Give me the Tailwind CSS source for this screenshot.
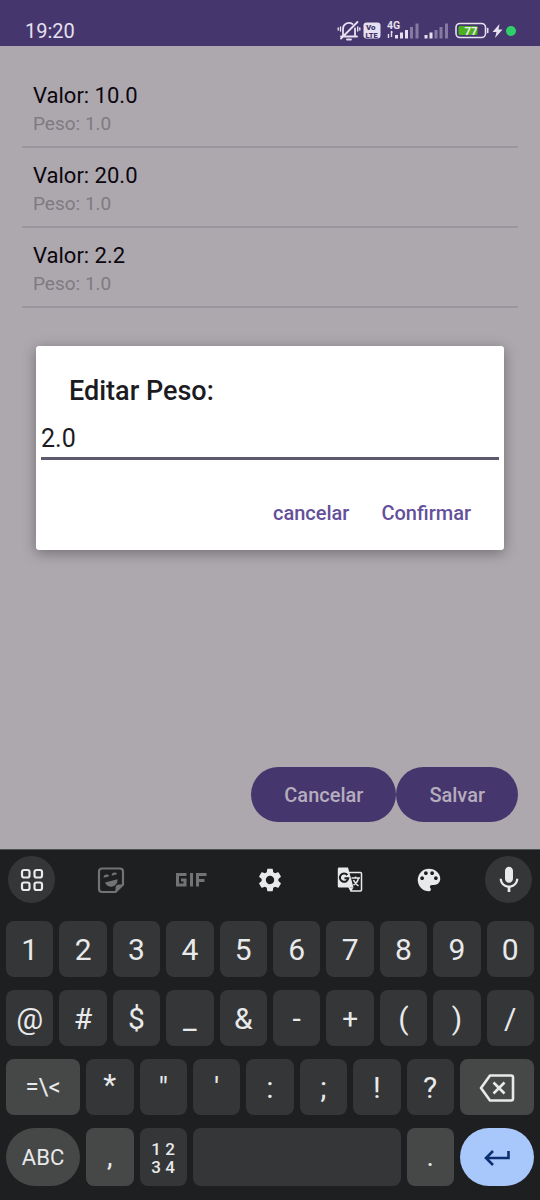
<!DOCTYPE html>
<html lang="pt-BR">
<head>
<meta charset="utf-8">
<meta name="viewport" content="width=device-width, initial-scale=1">
<title>Editar Peso</title>
<script src="https://cdn.jsdelivr.net/npm/@tailwindcss/browser@4"></script>
</head>
<body class="flex min-h-screen flex-col bg-[#ada8ae] font-['Roboto',sans-serif]">

<header class="flex h-[46px] items-end justify-between bg-[#45366d] pr-6 pb-1 pl-[25px] text-[#e6e0f0]">
  <span class="text-xl leading-[22px]">19:20</span>
  <div class="flex h-[22px] items-center">
    <!-- muted bell -->
    <svg class="h-[22px] w-[24px]" viewBox="0 0 24 22" fill="none" stroke="currentColor" stroke-width="1.8" stroke-linecap="round" stroke-linejoin="round">
      <path d="M6 15.500V9a6 6 0 0 1 9.500-5M18 8.500V15.500M4 16.500H20M10 19.500h4M20.500 2L4 18.500"/>
      <path d="M3.500 7v4M1.200 8v2M20.700 7v4M22.800 8v2" stroke-width="1.400"/>
    </svg>
    <!-- VoLTE badge -->
    <svg class="ml-[2px] h-[18px] w-[18px]" viewBox="0 0 18 18">
      <rect x="0.500" y="0.500" width="17" height="16" rx="3" fill="currentColor"/>
      <text x="3" y="8" font-size="8" font-weight="900" fill="#45366d">Vo</text>
      <text x="2.500" y="15.500" font-size="7.500" font-weight="900" fill="#45366d">LTE</text>
    </svg>
    <!-- 4G signal -->
    <svg class="ml-[6px] h-[22px] w-[34px]" viewBox="0 0 34 22" fill="currentColor">
      <text x="0" y="8.500" font-size="10.500" font-weight="700">4G</text>
      <path d="M1.500 14v4M4.500 11v6" stroke="currentColor" stroke-width="1.400"/>
      <path d="M3.500 12.500l1-2 1.500 2z"/>
      <path d="M8 15h3v3.500H8zM13 12.500h3v6h-3zM18 10h3v8.500h-3z"/>
      <path d="M23 7h3v11.500h-3zM28.500 3.500h3v15h-3z" opacity=".4"/>
    </svg>
    <svg class="ml-[3px] h-[22px] w-[26px]" viewBox="0 0 26 22" fill="currentColor">
      <path d="M0.500 15h3v3.500h-3zM5.500 12.500h3v6h-3z"/>
      <path d="M10.500 10h3v8.500h-3zM15.500 7h3v11.500h-3zM21 3.500h3v15h-3z" opacity=".4"/>
    </svg>
    <!-- battery -->
    <svg class="ml-[5px] h-[18px] w-[34px]" viewBox="0 0 34 18">
      <rect x="1" y="1.500" width="29.500" height="14" rx="4" fill="none" stroke="currentColor" stroke-width="1.600"/>
      <rect x="3.500" y="4" width="19" height="9" rx="1.500" fill="#4caf1d"/>
      <path d="M32.700 6.500v4" stroke="currentColor" stroke-width="1.600" stroke-linecap="round"/>
      <text x="16" y="12.500" text-anchor="middle" font-size="11.500" font-weight="700" fill="#eeeaf4">77</text>
    </svg>
    <svg class="ml-[3px] h-[14px] w-[11px]" viewBox="0 0 11 14" fill="currentColor"><path d="M7.500 0L0.500 8h4L3 14l7.500-8.500H6.500z"/></svg>
    <span class="ml-[3px] size-[10px] rounded-full bg-[#2fd069]"></span>
  </div>
</header>

<main class="relative flex flex-1 flex-col justify-between px-[22px] pt-[22px] pb-[27px]">
  <ul>
    <li class="flex h-20 flex-col justify-center border-b-2 border-[#9b969d] px-[11px] pt-1.5">
      <span class="text-[22px] leading-7 text-[#0b060f]">Valor: 10.0</span>
      <span class="text-[19px] leading-7 text-[#7f7a82]">Peso: 1.0</span>
    </li>
    <li class="flex h-20 flex-col justify-center border-b-2 border-[#9b969d] px-[11px] pt-1.5">
      <span class="text-[22px] leading-7 text-[#0b060f]">Valor: 20.0</span>
      <span class="text-[19px] leading-7 text-[#7f7a82]">Peso: 1.0</span>
    </li>
    <li class="flex h-20 flex-col justify-center border-b-2 border-[#9b969d] px-[11px] pt-1.5">
      <span class="text-[22px] leading-7 text-[#0b060f]">Valor: 2.2</span>
      <span class="text-[19px] leading-7 text-[#7f7a82]">Peso: 1.0</span>
    </li>
  </ul>

  <div class="flex justify-end text-xl font-medium text-[#b5adbd]">
    <button type="button" class="h-[55px] rounded-full bg-[#45366d] px-[33px]">Cancelar</button>
    <button type="button" class="h-[55px] rounded-full bg-[#45366d] px-[33px]">Salvar</button>
  </div>

  <div class="absolute inset-0 flex items-center px-9">
    <form role="dialog" aria-labelledby="titulo" class="w-full rounded-[3px] bg-white pt-[29px] pb-[18px] shadow-[0_3px_14px_rgba(0,0,0,0.35)]">
      <label id="titulo" for="peso" class="block px-[33px] text-[27px] leading-8 font-medium text-[#1c1b1f]">Editar Peso:</label>
      <div class="px-[5px] pt-[13px]">
        <input id="peso" type="text" inputmode="decimal" value="2.0" class="block h-10 w-full border-b-[3px] border-[#5d5a70] text-[25px] text-[#1c1b1f] outline-none">
      </div>
      <div class="flex justify-end gap-8 pt-[34px] pr-[33px] text-xl font-medium text-[#64509a]">
        <button type="button" class="h-[38px]">cancelar</button>
        <button type="button" class="h-[38px]">Confirmar</button>
      </div>
    </form>
  </div>
</main>

<section aria-label="Teclado" class="border-t border-[#4c5251] bg-[#1e1f21] px-1.5 pt-1.5 pb-3.5 text-[#e8e9ea]">
  <div class="flex justify-between px-0.5 pb-[18px]">
    <button type="button" aria-label="Menu" class="flex size-[47px] items-center justify-center rounded-full bg-[#353638]">
      <svg class="size-6" viewBox="0 0 24 24" fill="none" stroke="currentColor" stroke-width="2.200"><rect x="2" y="2" width="7.500" height="7.500" rx="2"/><rect x="14.500" y="2" width="7.500" height="7.500" rx="2"/><rect x="2" y="14.500" width="7.500" height="7.500" rx="2"/><rect x="14.500" y="14.500" width="7.500" height="7.500" rx="2"/></svg>
    </button>
    <button type="button" aria-label="Figurinhas" class="flex size-[47px] items-center justify-center text-[#727375]">
      <svg class="size-7" viewBox="0 0 28 28" fill="none" stroke="currentColor" stroke-width="2.200">
        <path d="M5 2.500H23a3 3 0 0 1 3 3V18.500L18.500 26H5a3 3 0 0 1-3-3V5.500a3 3 0 0 1 3-3z"/>
        <path d="M19 26v-4.500a2.500 2.500 0 0 1 2.500-2.500H26L19 26z" fill="currentColor" stroke-width="1"/>
        <path d="M8 16.500l12.500-3.200a6.500 6.500 0 0 1-12.500 3.200z" fill="currentColor" stroke="none"/>
        <path d="M7.500 11.500a2.100 2.100 0 0 1 3.800-1M15.500 9.300a2.100 2.100 0 0 1 3.800-.9"/>
      </svg>
    </button>
    <button type="button" aria-label="GIF" class="flex size-[47px] items-center justify-center text-[#727375]">
      <svg class="h-4 w-8" viewBox="0 0 32 16" fill="none" stroke="currentColor" stroke-width="3">
        <path d="M11.500 2.500H2.500V13H10V8H6M16.500 1V14.500M22.500 14.500V2.500H31.500M22.500 8.500H29.500"/>
      </svg>
    </button>
    <button type="button" aria-label="Configurações" class="flex size-[47px] items-center justify-center">
      <svg class="size-7" viewBox="0 0 24 24" fill="currentColor"><path d="M19.140 12.940c.04-.3.060-.61.060-.94 0-.32-.02-.64-.07-.94l2.030-1.580a.49.49 0 0 0 .12-.61l-1.920-3.320a.488.488 0 0 0-.59-.22l-2.390.96c-.5-.38-1.030-.7-1.620-.94l-.36-2.540a.484.484 0 0 0-.48-.41h-3.840c-.24 0-.43.17-.47.41l-.36 2.540c-.59.24-1.130.57-1.620.94l-2.390-.96c-.22-.08-.47 0-.59.22L2.740 8.870c-.12.21-.08.47.12.61l2.030 1.580c-.05.3-.09.63-.09.94s.02.64.07.94l-2.030 1.580a.49.49 0 0 0-.12.61l1.920 3.320c.12.22.37.29.59.22l2.390-.96c.5.38 1.030.7 1.620.94l.36 2.540c.05.24.24.41.48.41h3.840c.24 0 .44-.17.47-.41l.36-2.540c.59-.24 1.130-.56 1.620-.94l2.390.96c.22.080.47 0 .59-.22l1.920-3.320c.12-.22.070-.47-.12-.61l-2.010-1.580zM12 15.600A3.610 3.610 0 0 1 8.400 12c0-1.980 1.620-3.600 3.600-3.600s3.600 1.620 3.600 3.600-1.620 3.600-3.600 3.600z"/></svg>
    </button>
    <button type="button" aria-label="Traduzir" class="flex size-[47px] items-center justify-center">
      <svg class="h-[26px] w-[26px]" viewBox="0 0 26 26" fill="none">
        <path d="M11 5.500H23.500a1 1 0 0 1 1 1V23a1 1 0 0 1-1 1H14L11.500 19" stroke="currentColor" stroke-width="1.500"/>
        <path d="M2 0.500H11L16.500 20.500H2A1.200 1.200 0 0 1 0.800 19.300V1.700A1.200 1.200 0 0 1 2 0.500z" fill="currentColor"/>
        <path d="M12 20.500h4.500L14 24.500z" fill="currentColor"/>
        <path d="M10.400 8A4.200 4.200 0 1 0 11.300 11.200H7.500" stroke="#1e1f21" stroke-width="2"/>
        <path d="M14.500 11H23M18.500 9.500V11M21.500 11c-.6 3-2.500 5.500-5 7M16.500 13c1 2.500 3 4.500 5 6" stroke="currentColor" stroke-width="1.500"/>
      </svg>
    </button>
    <button type="button" aria-label="Tema" class="flex size-[47px] items-center justify-center">
      <svg class="size-[30px]" viewBox="0 0 24 24" fill="currentColor"><path d="M12 3a9 9 0 0 0 0 18c.83 0 1.500-.67 1.500-1.500 0-.39-.15-.74-.39-1.010-.23-.26-.38-.61-.38-.99 0-.83.67-1.500 1.500-1.500H16c2.760 0 5-2.240 5-5 0-4.420-4.030-8-9-8zm-5.500 9c-.83 0-1.500-.67-1.500-1.500S5.670 9 6.500 9 8 9.670 8 10.500 7.330 12 6.500 12zm3-4C8.670 8 8 7.330 8 6.500S8.670 5 9.500 5s1.500.67 1.500 1.500S10.330 8 9.500 8zm5 0c-.83 0-1.500-.67-1.500-1.500S13.670 5 14.500 5s1.500.67 1.500 1.500S15.330 8 14.500 8zm3 4c-.83 0-1.500-.67-1.500-1.500S16.670 9 17.500 9s1.500.67 1.500 1.500-.67 1.500-1.500 1.500z"/></svg>
    </button>
    <button type="button" aria-label="Voz" class="flex size-[47px] items-center justify-center rounded-full bg-[#353638]">
      <svg class="size-8" viewBox="0 0 24 24" fill="currentColor"><path d="M12 14c1.660 0 2.990-1.340 2.990-3L15 5c0-1.660-1.340-3-3-3S9 3.340 9 5v6c0 1.660 1.340 3 3 3zm5.300-3c0 3-2.540 5.100-5.300 5.100S6.700 14 6.700 11H5c0 3.410 2.720 6.230 6 6.720V21h2v-3.280c3.280-.48 6-3.300 6-6.720h-1.700z"/></svg>
    </button>
  </div>

  <div class="grid grid-cols-[repeat(20,minmax(0,1fr))] grid-rows-[56px_56px_56px_58px] gap-x-1.5 gap-y-[13px] text-[30px] leading-9">
    <button type="button" class="col-span-2 rounded-lg bg-[#353638] pt-0.5">1</button>
    <button type="button" class="col-span-2 rounded-lg bg-[#353638] pt-0.5">2</button>
    <button type="button" class="col-span-2 rounded-lg bg-[#353638] pt-0.5">3</button>
    <button type="button" class="col-span-2 rounded-lg bg-[#353638] pt-0.5">4</button>
    <button type="button" class="col-span-2 rounded-lg bg-[#353638] pt-0.5">5</button>
    <button type="button" class="col-span-2 rounded-lg bg-[#353638] pt-0.5">6</button>
    <button type="button" class="col-span-2 rounded-lg bg-[#353638] pt-0.5">7</button>
    <button type="button" class="col-span-2 rounded-lg bg-[#353638] pt-0.5">8</button>
    <button type="button" class="col-span-2 rounded-lg bg-[#353638] pt-0.5">9</button>
    <button type="button" class="col-span-2 rounded-lg bg-[#353638] pt-0.5">0</button>

    <button type="button" class="col-span-2 rounded-lg bg-[#353638] pt-0.5">@</button>
    <button type="button" class="col-span-2 rounded-lg bg-[#353638] pt-0.5">#</button>
    <button type="button" class="col-span-2 rounded-lg bg-[#353638] pt-0.5">$</button>
    <button type="button" class="col-span-2 rounded-lg bg-[#353638] pt-0.5">_</button>
    <button type="button" class="col-span-2 rounded-lg bg-[#353638] pt-0.5">&amp;</button>
    <button type="button" class="col-span-2 rounded-lg bg-[#353638] pt-0.5">-</button>
    <button type="button" class="col-span-2 rounded-lg bg-[#353638] pt-0.5 text-[28px]">+</button>
    <button type="button" class="col-span-2 rounded-lg bg-[#353638] pt-0.5">(</button>
    <button type="button" class="col-span-2 rounded-lg bg-[#353638] pt-0.5">)</button>
    <button type="button" class="col-span-2 rounded-lg bg-[#353638] pt-0.5">/</button>

    <button type="button" class="col-span-3 rounded-lg bg-[#464847] text-2xl">=\&lt;</button>
    <button type="button" class="col-span-2 rounded-lg bg-[#353638] pb-1">*</button>
    <button type="button" class="col-span-2 rounded-lg bg-[#353638] pt-0.5">"</button>
    <button type="button" class="col-span-2 rounded-lg bg-[#353638] pt-0.5">'</button>
    <button type="button" class="col-span-2 rounded-lg bg-[#353638] pt-0.5">:</button>
    <button type="button" class="col-span-2 rounded-lg bg-[#353638] pt-0.5">;</button>
    <button type="button" class="col-span-2 rounded-lg bg-[#353638] pt-0.5">!</button>
    <button type="button" class="col-span-2 rounded-lg bg-[#353638] pt-0.5">?</button>
    <button type="button" aria-label="Apagar" class="col-span-3 flex items-center justify-center rounded-lg bg-[#464847] pt-0.5">
      <svg class="h-[30px] w-9" viewBox="0 0 36 30" fill="none" stroke="currentColor" stroke-width="2.600" stroke-linejoin="round"><path d="M11 2.500H32a2 2 0 0 1 2 2V25.500a2 2 0 0 1-2 2H11L2 15z"/><path d="M14.500 9.500l11 11M25.500 9.500L14.500 20.500"/></svg>
    </button>

    <button type="button" class="col-span-3 rounded-full bg-[#464847] pt-0.5 text-[22px]">ABC</button>
    <button type="button" class="col-span-2 rounded-lg bg-[#464847] text-[28px]">,</button>
    <button type="button" aria-label="Teclado numérico" class="col-span-2 grid grid-cols-[10px_10px] content-center justify-center gap-x-1 rounded-lg bg-[#353638] pt-0.5 text-[17px] leading-[18px] font-medium"><span>1</span><span>2</span><span>3</span><span>4</span></button>
    <button type="button" aria-label="Espaço" class="col-span-8 rounded-lg bg-[#353638]"></button>
    <button type="button" class="col-span-2 rounded-lg bg-[#464847] text-[28px]">.</button>
    <button type="button" aria-label="Enter" class="col-span-3 flex items-center justify-center rounded-full bg-[#a8c7fa] pt-0.5 text-[#0b2f70]">
      <svg class="h-4 w-[26px]" viewBox="0 0 26 16" fill="none" stroke="currentColor" stroke-width="2.600"><path d="M24.500 1V8H2.500M9 1L2 8l7 7"/></svg>
    </button>
  </div>
</section>
</body>
</html>
